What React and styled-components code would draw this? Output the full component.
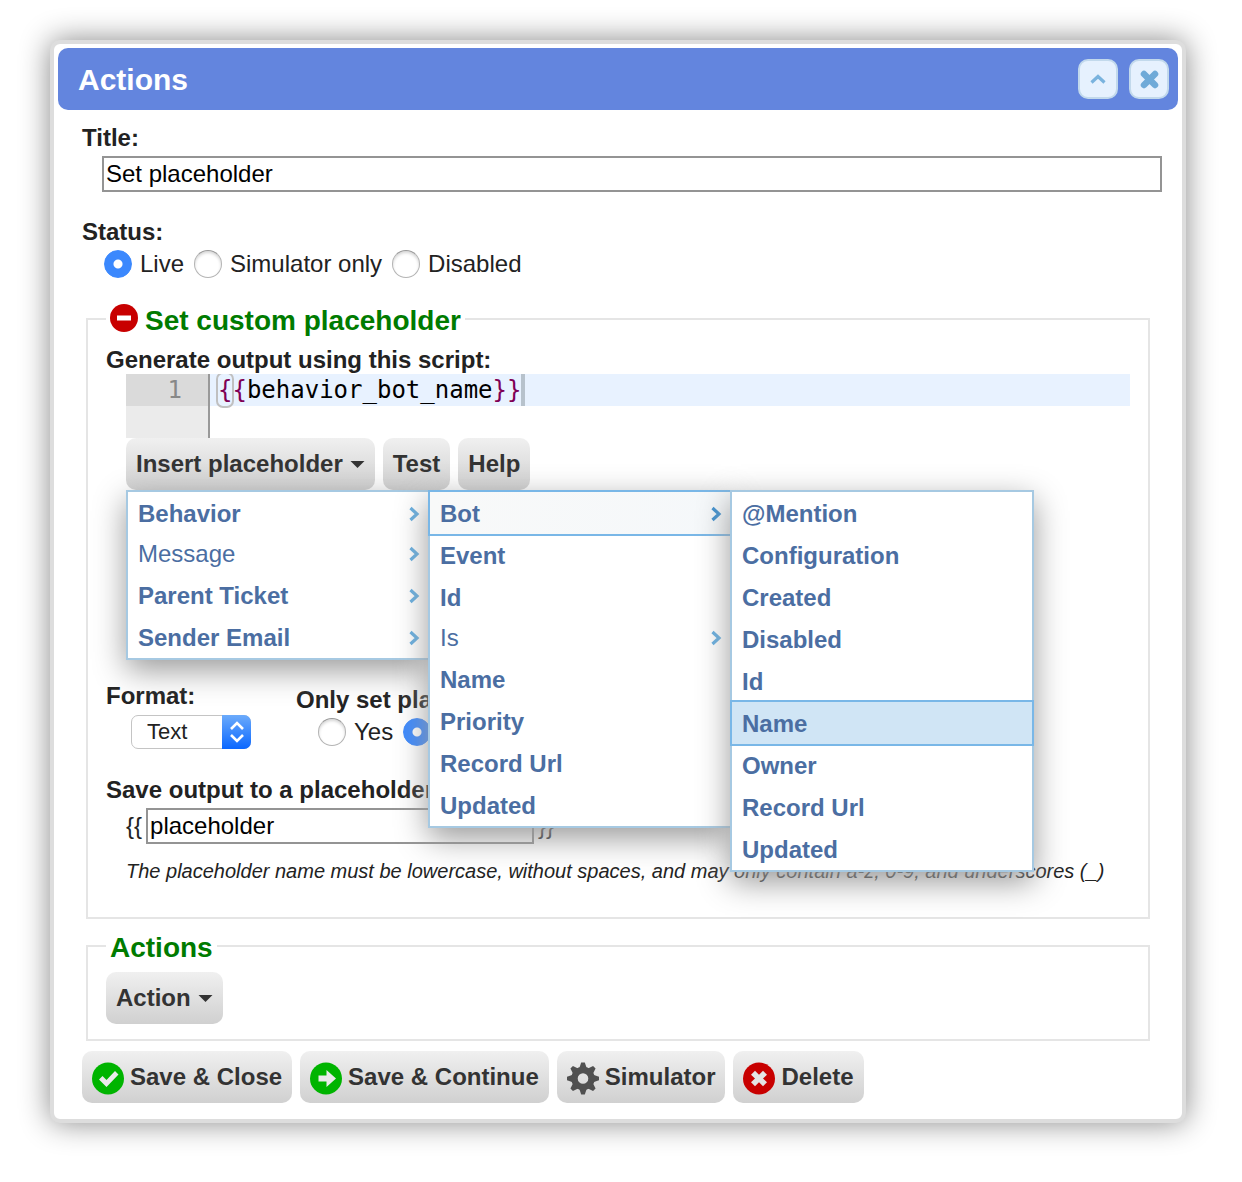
import React, { useState } from "react";
import styled, { createGlobalStyle, css } from "styled-components";

const GlobalStyle = createGlobalStyle`
  * { box-sizing: border-box; }
  body {
    margin: 0;
    background: #fff;
    color: #222;
    font: 24px/28px "Liberation Sans", Helvetica, Arial, sans-serif;
  }
  button, input, select { font: inherit; }
`;

const Page = styled.main`
  padding: 40px 56px 58px 50px;
`;

const Dialog = styled.section`
  padding: 4px;
  border: 4px solid #ddd;
  border-radius: 10px;
  background: #fff;
  box-shadow: 0 0 30px #888;
`;

const Header = styled.header`
  display: flex;
  align-items: center;
  gap: 11px;
  height: 62px;
  padding: 0 9px 0 20px;
  border-radius: 10px;
  background: #6385de;
`;

const DialogTitle = styled.h1`
  flex: 1;
  margin: 0;
  padding-top: 2px;
  color: #fff;
  font-size: 30px;
  line-height: 34px;
`;

const HeaderButton = styled.button`
  display: grid;
  place-items: center;
  width: 40px;
  height: 40px;
  padding: 0;
  border: 2px solid #c2d9ec;
  border-radius: 10px;
  background: #e6f1fe;
`;

const Form = styled.form`
  padding: 14px 16px 12px 24px;
`;

const Field = styled.div`
  margin-bottom: ${(p) => p.$after || 0}px;
`;

const labelStyle = css`
  display: block;
  font-weight: bold;
  line-height: 28px;
`;

const Label = styled.label`
  ${labelStyle}
`;

const Caption = styled.div`
  ${labelStyle}
`;

const Indent = styled.div`
  padding: ${(p) => p.$top || 0}px 0 0 20px;
`;

const TextInput = styled.input`
  display: block;
  width: ${(p) => p.$width || "100%"};
  height: 36px;
  padding: 0 2px;
  border: 2px solid #949494;
  border-radius: 0;
  background: #fff;
  color: #000;
`;

const RadioRow = styled.div`
  display: flex;
  align-items: center;
  gap: 10px;
  padding: 4px 0 0 22px;
`;

const RadioLabel = styled.label`
  display: flex;
  align-items: center;
  gap: 8px;
`;

const Radio = styled.input`
  appearance: none;
  width: 28px;
  height: 28px;
  margin: 0;
  border: 1px solid #b4b4b4;
  border-top-color: #999;
  border-radius: 50%;
  background: #fff;
  box-shadow: inset 0 2px 3px rgba(0, 0, 0, 0.16);

  &:checked {
    border-color: #3b88fd;
    background: radial-gradient(circle, #fff 0 4px, #3b88fd 5px);
    box-shadow: none;
  }
`;

const Fieldset = styled.fieldset`
  min-width: 0;
  margin: 0 12px ${(p) => p.$after}px 4px;
  padding: ${(p) => p.$top}px 18px ${(p) => p.$bottom}px;
  border: 2px solid #e5e5e5;
`;

const Legend = styled.legend`
  display: flex;
  gap: 7px;
  padding: 3px 4px 0;
  color: #007b00;
  font-size: 28px;
  font-weight: bold;
  line-height: 29px;

  svg { margin-top: -2px; }
`;

const Editor = styled.div`
  display: flex;
  height: 64px;
  overflow: hidden;
  font: 24px/32px "DejaVu Sans Mono", "Liberation Mono", monospace;
`;

const Gutter = styled.div`
  flex: none;
  width: 84px;
  border-right: 2px solid #999;
  background: #ebebeb;
`;

const LineNumber = styled.div`
  padding-right: 26px;
  background: #dadada;
  color: #888;
  text-align: right;
`;

const Code = styled.div`
  flex: 1;
  outline: none;
`;

const CodeLine = styled.div`
  display: flex;
  height: 32px;
  padding-left: 8px;
  background: #e8f2ff;
  color: #000;
  white-space: pre;
`;

const Brace = styled.span`
  color: #7f0055;
  ${(p) =>
    p.$matched &&
    css`
      border-radius: 5px;
      outline: 2px solid #c0c0c0;
    `}
`;

const Cursor = styled.span`
  width: 4px;
  height: 32px;
  background: #b7c2cc;
`;

const ButtonRow = styled.div`
  display: flex;
  gap: 8px;
`;

const Button = styled.button`
  display: flex;
  align-items: center;
  gap: ${(p) => (p.$menu ? 7 : 6)}px;
  height: 52px;
  padding: 0 10px;
  border: 0;
  border-radius: 10px;
  background: linear-gradient(#f0f0f0, #d0d0d0);
  color: #333;
  font-weight: bold;
  white-space: nowrap;

  svg { flex: none; }
`;

const ScriptTools = styled.div`
  position: relative;
  margin-bottom: 192px;
`;

const menuBox = css`
  position: absolute;
  z-index: 1;
  width: 304px;
  margin: 0;
  padding: 0;
  border: 2px solid #a6c9e2;
  background: #fff;
  box-shadow: 0 10px 30px #999;
  list-style: none;
`;

const Menu = styled.ul`
  ${menuBox}
  top: 100%;
  left: 0;
`;

const Submenu = styled.ul`
  ${menuBox}
  top: -2px;
  left: 100%;
`;

const MenuItem = styled.li`
  position: relative;
`;

const MenuLink = styled.a`
  display: flex;
  align-items: center;
  justify-content: space-between;
  padding: ${(p) => (p.$plain ? 0 : 2)}px 8px 0 10px;
  color: #4b6ea2;
  font-weight: ${(p) => (p.$plain ? "normal" : "bold")};
  line-height: 40px;
  text-decoration: none;

  ${(p) =>
    p.$state &&
    css`
      outline: 2px solid #79b7e7;
      background: ${p.$state === "open" ? "linear-gradient(90deg, #f8f9f9, #f5f8fa)" : "#d0e5f5"};
    `}
`;

const Columns = styled.div`
  display: flex;
  margin-bottom: 27px;
`;

const FormatColumn = styled.div`
  flex: none;
  width: 190px;
`;

const ModeColumn = styled.div`
  padding-top: 4px;
`;

const SelectBox = styled.div`
  position: relative;
  width: 120px;
  margin: 5px 0 0 25px;
`;

const Select = styled.select`
  display: block;
  appearance: none;
  width: 100%;
  height: 34px;
  padding: 0 30px 0 15px;
  border: 1px solid #c4c4c4;
  border-radius: 7px;
  background: #fff;
  color: #222;
  font-size: 22px;
`;

const SelectArrows = styled.span`
  position: absolute;
  top: 0;
  right: 0;
  display: grid;
  place-items: center;
  width: 29px;
  height: 34px;
  border-radius: 0 7px 7px 0;
  background: linear-gradient(#6cabfb, #0a67ff);
  pointer-events: none;
`;

const PlaceholderRow = styled.div`
  display: flex;
  align-items: center;
  gap: 4px;
`;

const Hint = styled.p`
  margin: 13px 0 0;
  font-size: 20px;
  font-style: italic;
  white-space: nowrap;
`;

function Caret() {
  return (
    <svg width="15" height="8" viewBox="0 0 15 8" aria-hidden="true">
      <path d="M0.5 1h14l-7 7z" fill="#333" />
    </svg>
  );
}

function Chevron({ strong }) {
  return (
    <svg width="12" height="16" viewBox="0 0 12 16" aria-hidden="true">
      <path d="M2.500 2l6.500 6-6.500 6" fill="none" stroke={strong ? "#3e8fce" : "#64ade0"} strokeWidth="3.200" />
    </svg>
  );
}

function CollapseIcon() {
  return (
    <svg width="16" height="10" viewBox="0 0 16 10" aria-hidden="true">
      <path d="M1.500 8.500L8 2.500l6.500 6" fill="none" stroke="#7ab3de" strokeWidth="3.200" />
    </svg>
  );
}

function CloseIcon() {
  return (
    <svg width="20" height="20" viewBox="0 0 20 20" aria-hidden="true">
      <path d="M5 5l11 11M16 5L5 16" stroke="#6faad8" strokeWidth="6.500" strokeLinecap="round" />
    </svg>
  );
}

function RemoveIcon() {
  return (
    <svg width="28" height="28" viewBox="0 0 28 28" aria-hidden="true">
      <circle cx="14" cy="14" r="14" fill="#c80000" />
      <rect x="7" y="11.500" width="14" height="5" fill="#fff" />
    </svg>
  );
}

function DiscIcon({ color, children }) {
  return (
    <svg width="32" height="36" viewBox="0 -3 32 36" aria-hidden="true">
      <circle cx="16" cy="16.500" r="16" fill={color} />
      {children}
    </svg>
  );
}

function CheckIcon() {
  return (
    <DiscIcon color="#00b400">
      <path d="M7 17.500l3.500-3.500 4 4 8.500-9 3.500 3.500-12 12.500z" fill="#eaeaea" />
    </DiscIcon>
  );
}

function ArrowIcon() {
  return (
    <DiscIcon color="#00b400">
      <path d="M8.500 13.500h8v-5.500l9.500 8.500-9.500 8.500v-5.500h-8z" fill="#eaeaea" />
    </DiscIcon>
  );
}

function DeleteIcon() {
  return (
    <DiscIcon color="#c80000">
      <path
        d="M16 12.700l4-4 4 4-4 3.800 4 3.800-4 4-4-4-4 4-4-4 4-3.800-4-3.800 4-4z"
        fill="#e4e4e4"
      />
    </DiscIcon>
  );
}

function GearIcon() {
  const teeth = [0, 45, 90, 135, 180, 225, 270, 315];
  return (
    <svg width="32" height="36" viewBox="0 -3 32 36" aria-hidden="true">
      <circle cx="16" cy="16.500" r="8.500" fill="none" stroke="#505050" strokeWidth="6.400" />
      {teeth.map((angle) => (
        <path key={angle} d="M12 7l2.200-6.500h3.600L20 7z" fill="#505050" transform={`rotate(${angle} 16 16.500)`} />
      ))}
    </svg>
  );
}

const MENU = [
  {
    label: "Behavior",
    items: [
      {
        label: "Bot",
        state: "open",
        items: [
          { label: "@Mention" },
          { label: "Configuration" },
          { label: "Created" },
          { label: "Disabled" },
          { label: "Id" },
          { label: "Name", state: "active" },
          { label: "Owner" },
          { label: "Record Url" },
          { label: "Updated" },
        ],
      },
      { label: "Event" },
      { label: "Id" },
      { label: "Is", plain: true, more: true },
      { label: "Name" },
      { label: "Priority" },
      { label: "Record Url" },
      { label: "Updated" },
    ],
  },
  { label: "Message", plain: true, more: true },
  { label: "Parent Ticket", more: true },
  { label: "Sender Email", more: true },
];

function MenuItems({ items }) {
  return items.map((item) => (
    <MenuItem key={item.label}>
      <MenuLink href="#" $plain={item.plain} $state={item.state}>
        {item.label}
        {(item.items || item.more) && <Chevron strong={item.state === "open"} />}
      </MenuLink>
      {item.items && (
        <Submenu>
          <MenuItems items={item.items} />
        </Submenu>
      )}
    </MenuItem>
  ));
}

function RadioGroup({ name, options, initial, label }) {
  const [value, setValue] = useState(initial);
  return (
    <RadioRow role="radiogroup" aria-label={label}>
      {options.map((option) => (
        <RadioLabel key={option}>
          <Radio type="radio" name={name} checked={value === option} onChange={() => setValue(option)} />
          {option}
        </RadioLabel>
      ))}
    </RadioRow>
  );
}

export default function App() {
  return (
    <>
      <GlobalStyle />
      <Page>
        <Dialog role="dialog" aria-labelledby="dialog-title">
          <Header>
            <DialogTitle id="dialog-title">Actions</DialogTitle>
            <HeaderButton type="button" aria-label="Collapse">
              <CollapseIcon />
            </HeaderButton>
            <HeaderButton type="button" aria-label="Close">
              <CloseIcon />
            </HeaderButton>
          </Header>
          <Form onSubmit={(e) => e.preventDefault()}>
            <Field $after={26}>
              <Label htmlFor="title">Title:</Label>
              <Indent $top={4}>
                <TextInput id="title" type="text" defaultValue="Set placeholder" />
              </Indent>
            </Field>
            <Field $after={25}>
              <Caption>Status:</Caption>
              <RadioGroup
                name="status"
                label="Status"
                options={["Live", "Simulator only", "Disabled"]}
                initial="Live"
              />
            </Field>

            <Fieldset $top={11} $bottom={32} $after={11}>
              <Legend>
                <RemoveIcon />
                Set custom placeholder
              </Legend>
              <Caption id="script-label">Generate output using this script:</Caption>
              <Indent>
                <Editor>
                  <Gutter>
                    <LineNumber>1</LineNumber>
                  </Gutter>
                  <Code role="textbox" aria-labelledby="script-label" tabIndex={0}>
                    <CodeLine>
                      <Brace $matched>{"{"}</Brace>
                      <Brace>{"{"}</Brace>
                      behavior_bot_name
                      <Brace>{"}}"}</Brace>
                      <Cursor />
                    </CodeLine>
                  </Code>
                </Editor>
                <ScriptTools>
                  <ButtonRow>
                    <Button type="button" $menu>
                      Insert placeholder
                      <Caret />
                    </Button>
                    <Button type="button">Test</Button>
                    <Button type="button">Help</Button>
                  </ButtonRow>
                  <Menu>
                    <MenuItems items={MENU} />
                  </Menu>
                </ScriptTools>
              </Indent>

              <Columns>
                <FormatColumn>
                  <Label htmlFor="format">Format:</Label>
                  <SelectBox>
                    <Select id="format" defaultValue="Text">
                      <option>Text</option>
                    </Select>
                    <SelectArrows>
                      <svg width="16" height="22" viewBox="0 0 16 22" aria-hidden="true">
                        <path
                          d="M2 8l6-6 6 6M2 14l6 6 6-6"
                          fill="none"
                          stroke="#fff"
                          strokeWidth="2.600"
                        />
                      </svg>
                    </SelectArrows>
                  </SelectBox>
                </FormatColumn>
                <ModeColumn>
                  <Caption>Only set placeholder in simulator mode:</Caption>
                  <RadioGroup name="mode" label="Simulator mode" options={["Yes", "No"]} initial="No" />
                </ModeColumn>
              </Columns>

              <Label htmlFor="placeholder">Save output to a placeholder named:</Label>
              <Indent $top={4}>
                <PlaceholderRow>
                  {"{{"}
                  <TextInput id="placeholder" type="text" defaultValue="placeholder" $width="388px" />
                  {"}}"}
                </PlaceholderRow>
                <Hint>
                  The placeholder name must be lowercase, without spaces, and may only contain a-z, 0-9, and
                  underscores (_)
                </Hint>
              </Indent>
            </Fieldset>

            <Fieldset $top={10} $bottom={15} $after={10}>
              <Legend>Actions</Legend>
              <ButtonRow>
                <Button type="button" $menu>
                  Action
                  <Caret />
                </Button>
              </ButtonRow>
            </Fieldset>

            <ButtonRow>
              <Button type="submit">
                <CheckIcon />
                Save &amp; Close
              </Button>
              <Button type="button">
                <ArrowIcon />
                Save &amp; Continue
              </Button>
              <Button type="button">
                <GearIcon />
                Simulator
              </Button>
              <Button type="button">
                <DeleteIcon />
                Delete
              </Button>
            </ButtonRow>
          </Form>
        </Dialog>
      </Page>
    </>
  );
}
